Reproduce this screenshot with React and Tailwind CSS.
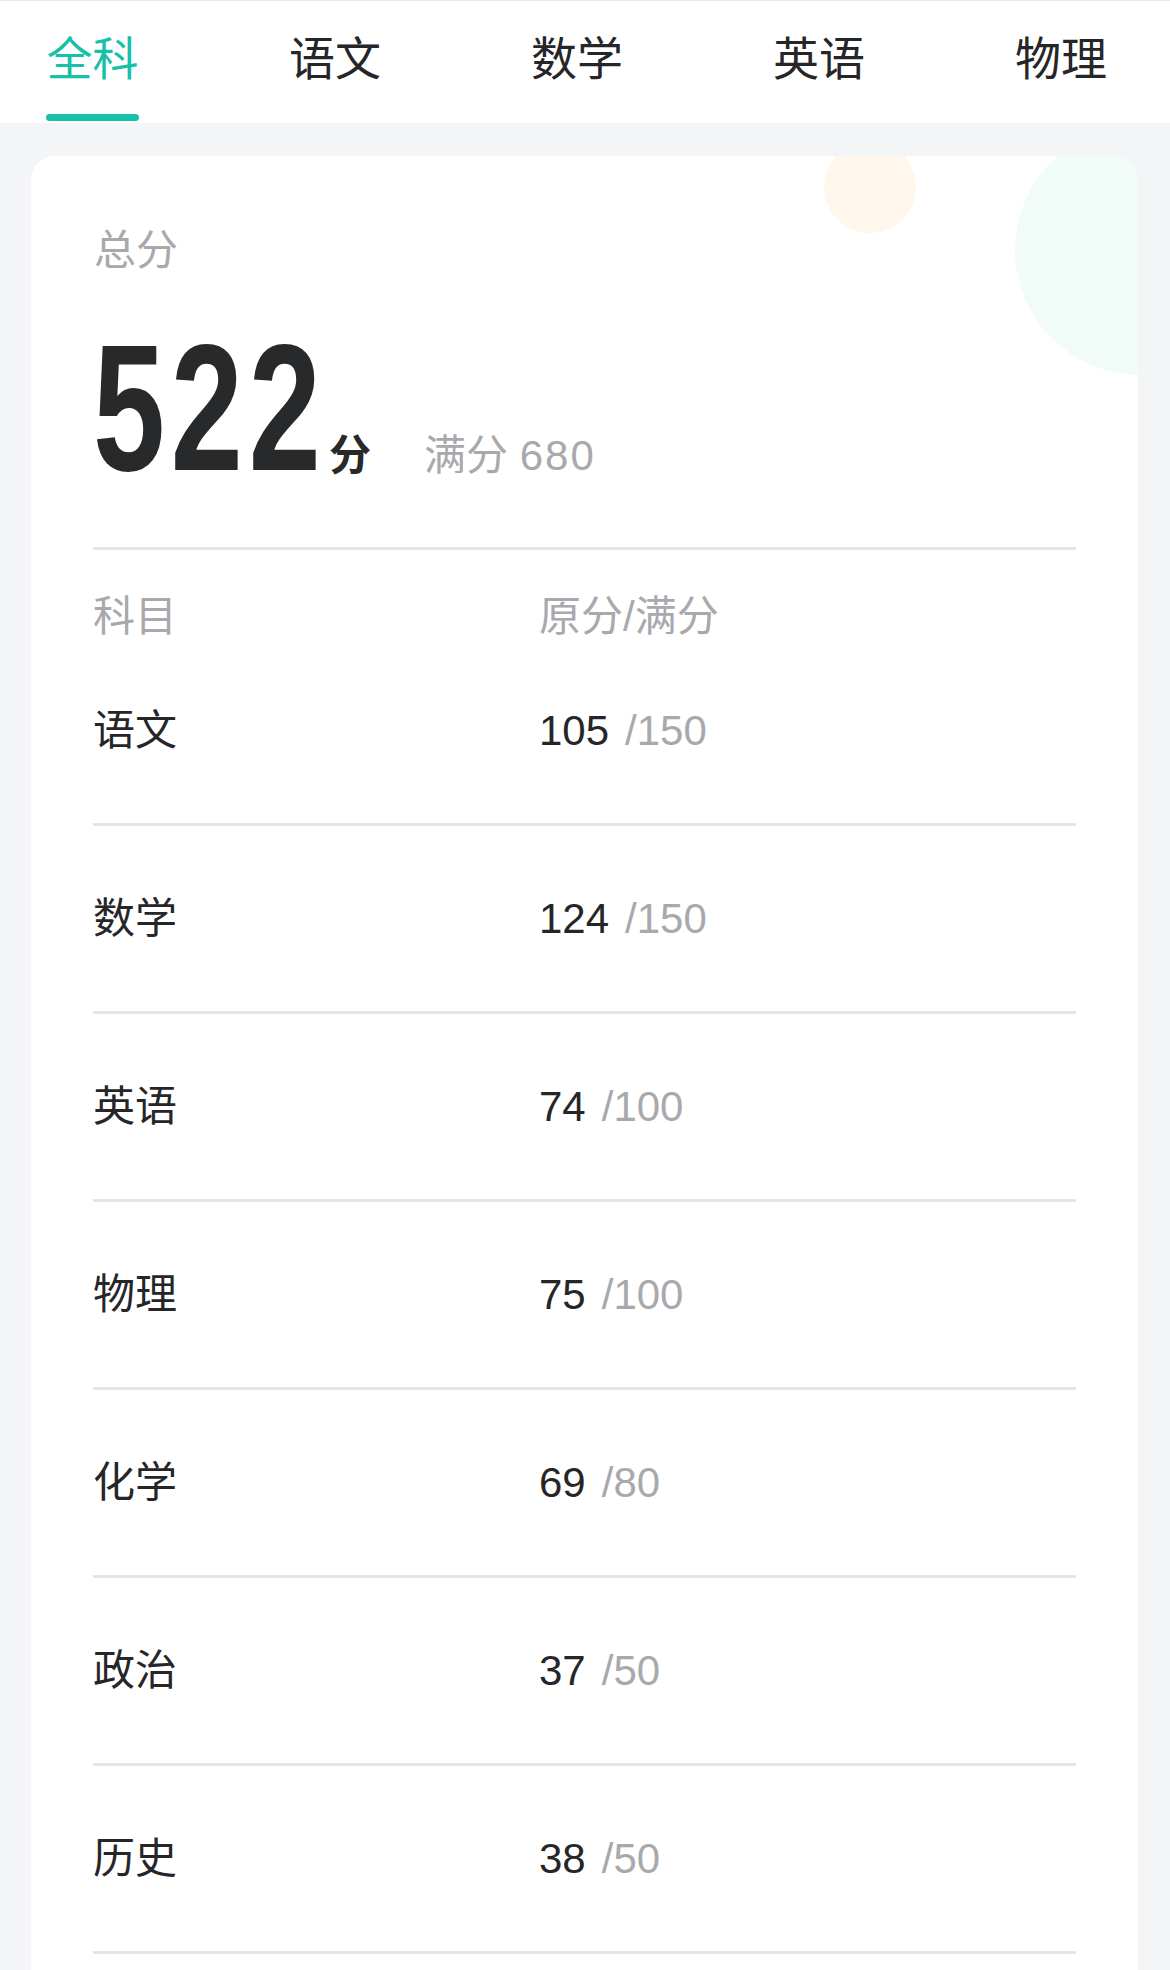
const tabs = ["全科", "语文", "数学", "英语", "物理"];

const rows = [
  { name: "语文", score: 105, full: 150 },
  { name: "数学", score: 124, full: 150 },
  { name: "英语", score: 74, full: 100 },
  { name: "物理", score: 75, full: 100 },
  { name: "化学", score: 69, full: 80 },
  { name: "政治", score: 37, full: 50 },
  { name: "历史", score: 38, full: 50 },
];

const font = { fontFamily: '"Liberation Sans", "Noto Sans CJK SC", sans-serif' };

function Tabs() {
  return (
    <div className="h-[123px] bg-white border-t border-[#ebebed] overflow-hidden">
      <div className="flex gap-[150px] pl-[46px] whitespace-nowrap">
        {tabs.map((t, i) => (
          <div key={t} className="flex flex-col items-center shrink-0 pt-[35px]">
            <span
              className={`text-[46px] leading-[46px] ${i === 0 ? "text-[#17c0a9]" : "text-[#262628]"}`}
            >
              {t}
            </span>
            {i === 0 && <div className="mt-[32px] w-[93px] h-[7px] rounded-full bg-[#17c0a9]" />}
          </div>
        ))}
      </div>
    </div>
  );
}

export default function App() {
  return (
    <div className="h-[1970px] overflow-hidden bg-[#f4f5f7]" style={font}>
      <Tabs />
      <div className="pt-[33px] pl-[31px] pr-[32px]">
        <div className="relative overflow-hidden bg-white rounded-t-[24px] px-[62px] pb-[40px]">
          <div className="absolute left-[793px] top-[-15px] w-[92px] h-[92px] rounded-full bg-[#fff7ec]" />
          <div className="absolute left-[984px] top-[-31px] w-[250px] h-[250px] rounded-full bg-[#f1fbf8]" />

          <div className="relative">
            <div className="pt-[74px] pl-[1px] text-[42px] leading-[42px] text-[#a9a9ad]">总分</div>

            <div className="mt-[46px] flex items-baseline">
              <div className="w-[236px] shrink-0">
                <span className="inline-block origin-left scale-x-[0.72] text-[180px] leading-[180px] font-bold tracking-[8px] text-[#28292b]">
                  522
                </span>
              </div>
              <span className="text-[42px] font-semibold text-[#28292b]">分</span>
              <span className="ml-[53px] text-[42px] text-[#a9a9ad]">
                满分 <span className="tracking-[2px]">680</span>
              </span>
            </div>

            <div className="mt-[49px] border-t-[3px] border-[#e5e5e8]" />

            <div className="flex pt-[46px] text-[42px] leading-[42px] text-[#a9a9ad]">
              <div className="w-[446px] shrink-0">科目</div>
              <div>原分/满分</div>
            </div>

            {rows.map((r) => (
              <div
                key={r.name}
                className="h-[188px] box-border flex items-center border-b-[3px] border-[#e5e5e8] text-[42px] leading-[42px]"
              >
                <div className="w-[446px] shrink-0 text-[#262628]">{r.name}</div>
                <div className="flex items-baseline">
                  <span className="text-[#262628]">{r.score}</span>
                  <span className="ml-[16px] text-[#a9a9ad]">/{r.full}</span>
                </div>
              </div>
            ))}
          </div>
        </div>
      </div>
    </div>
  );
}
